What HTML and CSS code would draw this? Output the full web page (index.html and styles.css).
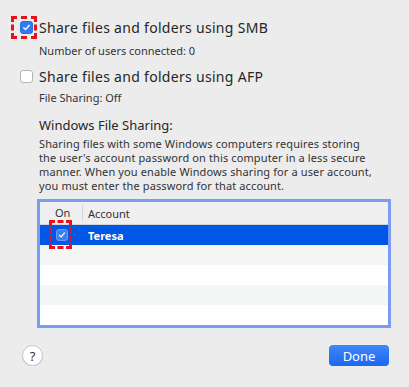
FILE: index.html
```html
<!DOCTYPE html>
<html lang="en">
<head>
    <meta charset="UTF-8">
    <title>File Sharing Options</title>
    <link rel="stylesheet" href="styles.css">
</head>
<body>
    <div class="sheet">
        <div class="option">
            <span class="check checked">
                <svg viewBox="0 0 13 13" width="13" height="13"><path d="M3.3 6.8 L5.4 9 L9.8 3.8" fill="none" stroke="#fff" stroke-width="1.6" stroke-linecap="round" stroke-linejoin="round"/></svg>
                <span class="mark mark-top"></span>
            </span>
            <span class="option-label">Share files and folders using SMB</span>
        </div>
        <div class="option-info">Number of users connected: 0</div>

        <div class="option second">
            <span class="check"></span>
            <span class="option-label">Share files and folders using AFP</span>
        </div>
        <div class="option-info small-gap">File Sharing: Off</div>

        <h2 class="section-title">Windows File Sharing:</h2>
        <p class="section-text">Sharing files with some Windows computers requires storing<br>the user's account password on this computer in a less secure manner. When you enable Windows sharing for a user account, you must enter the password for that account.</p>

        <div class="accounts">
            <div class="accounts-head">
                <div class="col-on">On</div>
                <div class="col-account">Account</div>
            </div>
            <div class="accounts-row selected">
                <div class="col-on">
                    <span class="check checked in-row">
                        <svg viewBox="0 0 13 13" width="12" height="12"><path d="M3.3 6.8 L5.4 9 L9.8 3.8" fill="none" stroke="#fff" stroke-width="1.6" stroke-linecap="round" stroke-linejoin="round"/></svg>
                        <span class="mark mark-row"></span>
                    </span>
                </div>
                <div class="col-account">Teresa</div>
            </div>
            <div class="accounts-row"></div>
            <div class="accounts-row"></div>
            <div class="accounts-row"></div>
            <div class="accounts-row"></div>
        </div>

        <div class="footer">
            <button class="help">?</button>
            <button class="done">Done</button>
        </div>
    </div>
</body>
</html>
```

FILE: styles.css
```css
body {
    margin: 0;
    background-color: #ececec;
    font-family: 'Noto Sans', 'Liberation Sans', sans-serif;
    color: #262626;
}
.sheet {
    padding: 18px 20px 0 20px;
}
.option {
    display: flex;
    align-items: center;
    height: 18px;
}
.option.second {
    margin-top: 9px;
}
.option-label {
    font-size: 14px;
    letter-spacing: 0.3px;
    margin-left: 6px;
}
.check {
    position: relative;
    display: inline-flex;
    align-items: center;
    justify-content: center;
    box-sizing: border-box;
    width: 13px;
    height: 13px;
    border-radius: 3px;
    background-color: #fff;
    border: 1px solid #b4b4b4;
}
.check.checked {
    background-color: #2f7bf5;
    border-color: #2a6fe0;
}
.check.in-row {
    width: 12px;
    height: 12px;
    background-color: #3d7ff0;
    border-color: #6d9cf2;
}
.mark {
    position: absolute;
    border: 3px dashed #e8101a;
}
.mark-top {
    left: -10px;
    top: -6px;
    width: 20px;
    height: 17px;
}
.mark-row {
    left: -8px;
    top: -10px;
    width: 17px;
    height: 23px;
}
.option-info {
    font-size: 11px;
    line-height: 14px;
    margin: 8px 0 0 19px;
    color: #333;
}
.option-info.small-gap {
    margin-top: 6px;
}
.section-title {
    font-size: 13px;
    font-weight: normal;
    line-height: 18px;
    margin: 11px 0 0 19px;
}
.section-text {
    font-size: 11px;
    line-height: 14px;
    letter-spacing: 0.12px;
    margin: 3px 0 0 19px;
    width: 345px;
    color: #333;
}
.accounts {
    margin: 6px 0 0 17px;
    width: 354px;
    box-sizing: border-box;
    border: 3px solid #7a9df3;
    background-color: #fff;
}
.accounts-head {
    display: flex;
    align-items: center;
    height: 22px;
    background-color: #efefef;
    border-bottom: 1px solid #d3d3d3;
    font-size: 11px;
    color: #333;
}
.accounts-head .col-on {
    border-right: 1px solid #d6d6d6;
    height: 16px;
    line-height: 16px;
    padding-left: 15px;
    box-sizing: border-box;
}
.col-on {
    width: 43px;
    flex-shrink: 0;
}
.col-account {
    padding-left: 5px;
}
.accounts-row {
    display: flex;
    align-items: center;
    height: 20px;
}
.accounts-row:nth-child(odd) {
    background-color: #f4f5f5;
}
.accounts-row.selected {
    background-color: #0057e5;
    color: #fff;
    font-size: 11px;
    font-weight: bold;
}
.accounts-row.selected .col-on {
    display: flex;
    justify-content: center;
}
.footer {
    display: flex;
    justify-content: space-between;
    align-items: center;
    margin-top: 17px;
    padding: 0 0 0 2px;
}
.help {
    width: 21px;
    height: 21px;
    border-radius: 50%;
    border: 1px solid #c4c4c4;
    background-color: #fff;
    font-family: 'Noto Sans', 'Liberation Sans', sans-serif;
    font-size: 13px;
    color: #333;
    padding: 0;
    box-shadow: 0 1px 1px rgba(0, 0, 0, 0.08);
}
.done {
    width: 60px;
    height: 21px;
    border: none;
    border-radius: 4px;
    background: linear-gradient(#3f87f8, #1b67ef);
    color: #fff;
    font-family: 'Noto Sans', 'Liberation Sans', sans-serif;
    font-size: 13px;
    padding: 0;
}
```
